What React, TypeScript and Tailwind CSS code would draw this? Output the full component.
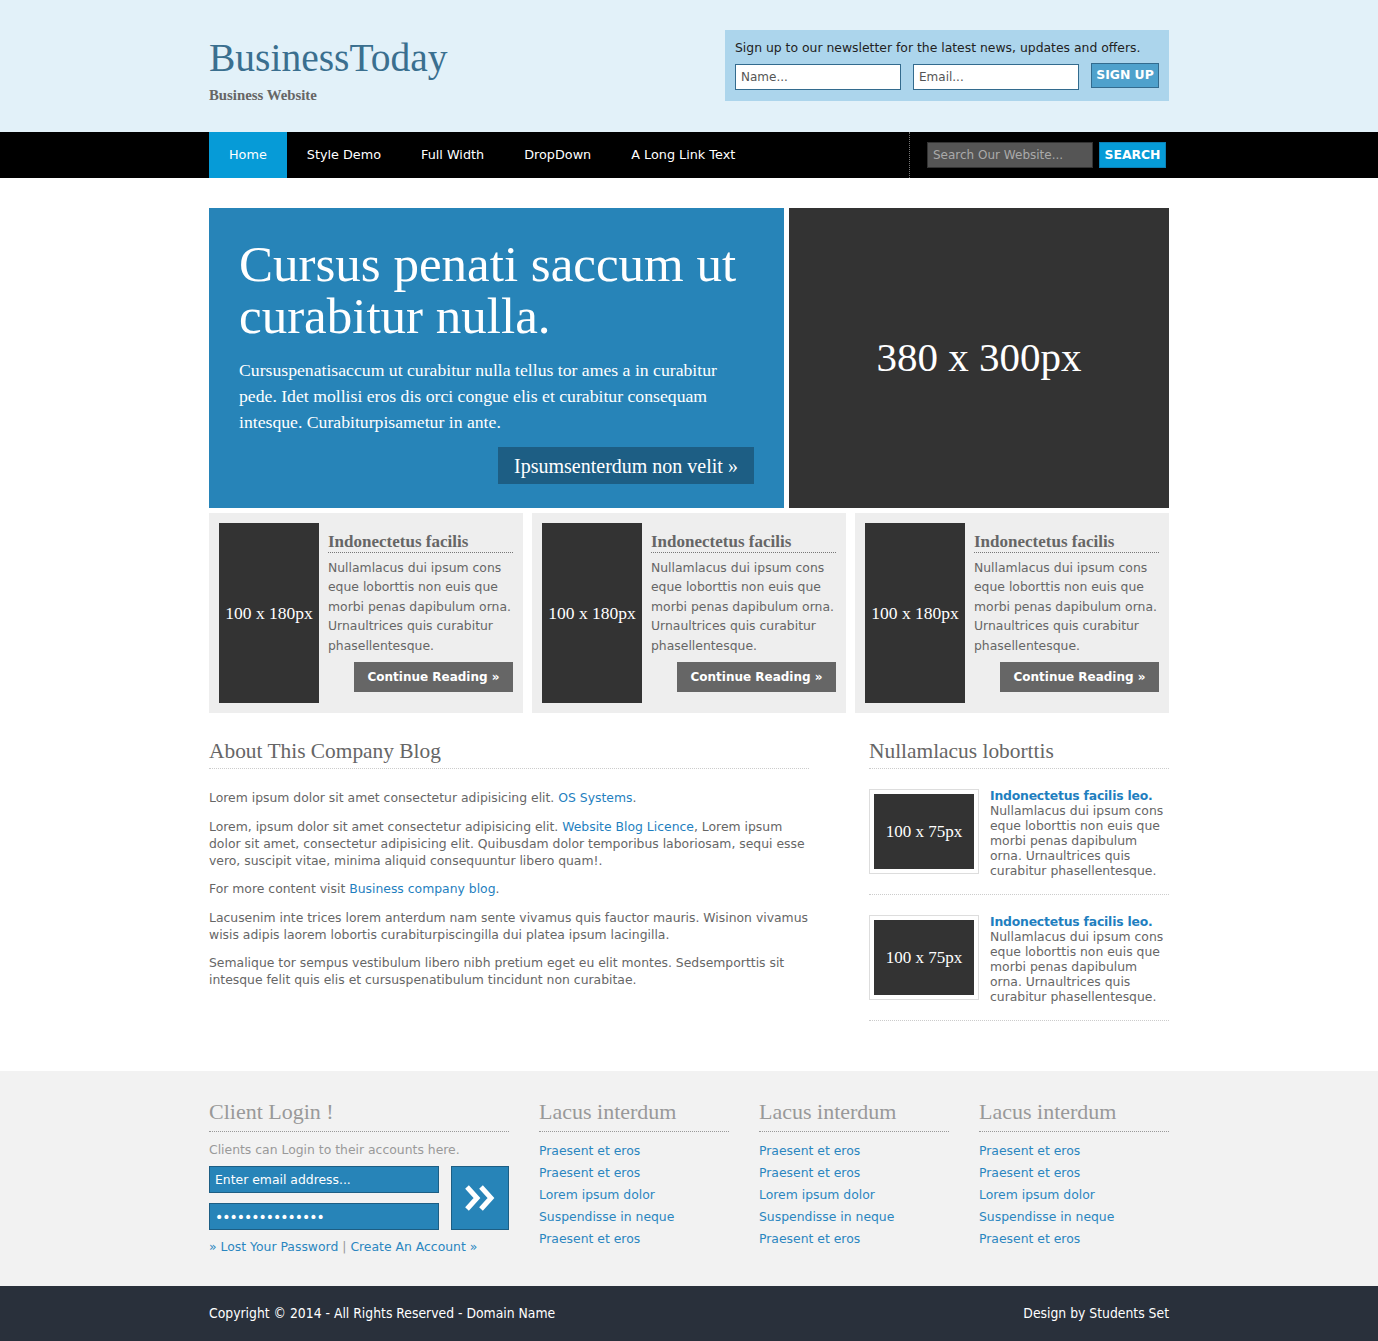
const serif = "font-['Liberation_Serif',Georgia,serif]"

function Card() {
  return (
    <div className="w-[314px] h-[200px] bg-[#eeeeee] p-[10px] flex gap-[9px]">
      <div className={`w-[100px] h-[180px] shrink-0 bg-[#333333] flex items-center justify-center text-white text-[17.5px] ${serif}`}>
        100 x 180px
      </div>
      <div className="flex-1 flex flex-col pt-[10px]">
        <h3 className={`${serif} text-[17px] font-bold text-[#666666] leading-[18px] pb-[1px] border-b border-dotted border-[#777777]`}>
          Indonectetus facilis
        </h3>
        <p className="mt-[5px] text-[12.4px] leading-[19.4px] text-[#666666]">
          Nullamlacus dui ipsum cons eque loborttis non euis que morbi penas dapibulum orna. Urnaultrices quis curabitur phasellentesque.
        </p>
        <button className="self-end mt-[7px] w-[159px] h-[30px] bg-[#666666] text-white text-[12px] font-bold">
          Continue Reading »
        </button>
      </div>
    </div>
  )
}

function SideItem() {
  return (
    <div className="flex items-start gap-[11px] pt-[20px] pb-[16px] border-b border-dotted border-[#cccccc]">
      <div className="shrink-0 w-[110px] h-[85px] border border-[#dddddd] bg-white p-[4px]">
        <div className={`w-full h-full bg-[#333333] flex items-center justify-center text-white text-[17px] ${serif}`}>
          100 x 75px
        </div>
      </div>
      <div className="text-[12.4px] leading-[15px] text-[#666666] -mt-[1px]">
        <a className="font-bold text-[#1f7fc0] tracking-[-0.2px]">Indonectetus facilis leo.</a>
        <p>Nullamlacus dui ipsum cons eque loborttis non euis que morbi penas dapibulum orna. Urnaultrices quis curabitur phasellentesque.</p>
      </div>
    </div>
  )
}

function LinkCol() {
  const links = ['Praesent et eros', 'Praesent et eros', 'Lorem ipsum dolor', 'Suspendisse in neque', 'Praesent et eros']
  return (
    <div className="w-[190px]">
      <h4 className={`${serif} text-[22px] text-[#999999] leading-[26px] pb-[6px] border-b border-dotted border-[#999999]`}>Lacus interdum</h4>
      <ul className="mt-[8px] text-[12.4px] leading-[22px] text-[#2a86c0]">
        {links.map((l, i) => (
          <li key={i}>{l}</li>
        ))}
      </ul>
    </div>
  )
}

export default function App() {
  return (
    <div className="min-h-screen bg-white font-['DejaVu_Sans',Verdana,sans-serif]">
      {/* Header */}
      <header className="h-[132px] bg-[#e2f1f9]">
        <div className="w-[960px] mx-auto flex justify-between">
          <div className="pt-[37px]">
            <h1 className={`${serif} text-[39.5px] leading-[42px] text-[#3a6f8f]`}>BusinessToday</h1>
            <p className={`${serif} mt-[5px] text-[14.8px] font-bold text-[#666666]`}>Business Website</p>
          </div>
          <div className="mt-[30px] w-[444px] h-[71px] bg-[#acd5ec] px-[10px] pt-[10px]">
            <p className="text-[12.4px] leading-[16px] text-[#222222] whitespace-nowrap">Sign up to our newsletter for the latest news, updates and offers.</p>
            <div className="mt-[8px] flex items-start">
              <input className="w-[166px] h-[26px] bg-white border border-[#336b8e] px-[5px] text-[12px] text-[#555] outline-none placeholder:text-[#555]" placeholder="Name..." />
              <input className="ml-[12px] w-[166px] h-[26px] bg-white border border-[#336b8e] px-[5px] text-[12px] text-[#555] outline-none placeholder:text-[#555]" placeholder="Email..." />
              <button className="ml-[12px] -mt-[1px] w-[68px] h-[25px] bg-[#4fa1cc] border border-[#336b8e] text-white text-[12.4px] font-bold">SIGN UP</button>
            </div>
          </div>
        </div>
      </header>

      {/* Nav */}
      <nav className="h-[46px] bg-black">
        <div className="w-[960px] mx-auto flex h-full">
          <ul className="flex text-[12.8px] text-white leading-[46px]">
            <li className="px-[20px] bg-[#069bd7]">Home</li>
            <li className="px-[20px]">Style Demo</li>
            <li className="px-[20px]">Full Width</li>
            <li className="px-[20px]">DropDown</li>
            <li className="px-[20px]">A Long Link Text</li>
          </ul>
          <div className="ml-auto flex items-start border-l border-dotted border-[#777777] pl-[17px] pr-[3px]">
            <input className="mt-[10px] w-[166px] h-[26px] bg-[#555555] border border-[#333333] px-[5px] text-[12px] text-[#aaa] outline-none placeholder:text-[#aaaaaa]" placeholder="Search Our Website..." />
            <button className="mt-[10px] ml-[6px] w-[67px] h-[26px] bg-[#069bd7] border border-[#0a7fb5] text-white text-[12.4px] font-bold">SEARCH</button>
          </div>
        </div>
      </nav>

      <main className="w-[960px] mx-auto pt-[30px]">
        {/* Hero */}
        <section className="flex gap-[5px] h-[300px]">
          <div className="w-[575px] bg-[#2784b8] px-[30px] pt-[30px] flex flex-col">
            <h2 className={`${serif} text-[51px] leading-[52px] text-white`}>
              Cursus penati saccum ut
              <br />
              curabitur nulla.
            </h2>
            <p className={`${serif} mt-[15px] text-[17.7px] leading-[26px] text-white`}>
              Cursuspenatisaccum ut curabitur nulla tellus tor ames a in curabitur pede. Idet mollisi eros dis orci congue elis et curabitur consequam intesque. Curabiturpisametur in ante.
            </p>
            <button className={`${serif} self-end mt-[12px] w-[256px] h-[37px] bg-[#1d5e84] text-white text-[20px]`}>
              Ipsumsenterdum non velit »
            </button>
          </div>
          <div className={`flex-1 bg-[#333333] flex items-center justify-center text-white text-[41px] ${serif}`}>
            380 x 300px
          </div>
        </section>

        {/* Cards */}
        <section className="mt-[5px] flex gap-[9px]">
          <Card />
          <Card />
          <Card />
        </section>

        {/* About + sidebar */}
        <section className="mt-[25px] flex justify-between">
          <div className="w-[600px]">
            <h3 className={`${serif} text-[21.4px] leading-[26px] text-[#666666] pb-[4px] border-b border-dotted border-[#cccccc]`}>About This Company Blog</h3>
            <div className="mt-[20px] text-[12.4px] leading-[17px] text-[#666666] flex flex-col gap-[11.5px]">
              <p>Lorem ipsum dolor sit amet consectetur adipisicing elit. <a className="text-[#1f7fc0]">OS Systems</a>.</p>
              <p>Lorem, ipsum dolor sit amet consectetur adipisicing elit. <a className="text-[#1f7fc0]">Website Blog Licence</a>, Lorem ipsum dolor sit amet, consectetur adipisicing elit. Quibusdam dolor temporibus laboriosam, sequi esse vero, suscipit vitae, minima aliquid consequuntur libero quam!.</p>
              <p>For more content visit <a className="text-[#1f7fc0]">Business company blog</a>.</p>
              <p>Lacusenim inte trices lorem anterdum nam sente vivamus quis fauctor mauris. Wisinon vivamus wisis adipis laorem lobortis curabiturpiscingilla dui platea ipsum lacingilla.</p>
              <p>Semalique tor sempus vestibulum libero nibh pretium eget eu elit montes. Sedsemporttis sit intesque felit quis elis et cursuspenatibulum tincidunt non curabitae.</p>
            </div>
          </div>
          <aside className="w-[300px]">
            <h3 className={`${serif} text-[21.4px] leading-[26px] text-[#666666] pb-[4px] border-b border-dotted border-[#cccccc]`}>Nullamlacus loborttis</h3>
            <SideItem />
            <SideItem />
          </aside>
        </section>
      </main>

      {/* Footer */}
      <footer className="mt-[50px] h-[215px] bg-[#f2f2f2]">
        <div className="w-[960px] mx-auto pt-[28px] flex gap-[30px]">
          <div className="w-[300px]">
            <h4 className={`${serif} text-[22px] text-[#999999] leading-[26px] pb-[6px] border-b border-dotted border-[#999999]`}>Client Login !</h4>
            <p className="mt-[10px] text-[12.4px] text-[#999999] leading-[16px]">Clients can Login to their accounts here.</p>
            <div className="mt-[8px] flex justify-between">
              <div className="flex flex-col gap-[10px]">
                <input className="w-[230px] h-[27px] bg-[#2784b8] border border-[#1d5e84] px-[5px] text-[12.4px] text-white outline-none placeholder:text-white" placeholder="Enter email address..." />
                <input type="password" defaultValue="passwordpasswor" className="w-[230px] h-[27px] bg-[#2784b8] border border-[#1d5e84] px-[5px] text-[14px] tracking-[-1px] text-white outline-none" />
              </div>
              <button className="w-[58px] h-[64px] bg-[#2784b8] border border-[#1d5e84] flex items-center justify-center">
                <svg width="32" height="28" viewBox="0 0 32 28">
                  <polyline points="3,3 13,14 3,25" fill="none" stroke="white" strokeWidth="5" />
                  <polyline points="17,3 27,14 17,25" fill="none" stroke="white" strokeWidth="5" />
                </svg>
              </button>
            </div>
            <p className="mt-[9px] text-[12.4px] leading-[16px] text-[#2a86c0]">
              » Lost Your Password <span className="text-[#999999]">|</span> Create An Account »
            </p>
          </div>
          <LinkCol />
          <LinkCol />
          <LinkCol />
        </div>
      </footer>

      <div className="h-[55px] bg-[#29303b]">
        <div className="w-[960px] mx-auto h-full flex items-center justify-between text-white text-[13.8px] font-['DejaVu_Sans_Condensed','DejaVu_Sans',sans-serif]">
          <span>Copyright © 2014 - All Rights Reserved - Domain Name</span>
          <span>Design by Students Set</span>
        </div>
      </div>
    </div>
  )
}
